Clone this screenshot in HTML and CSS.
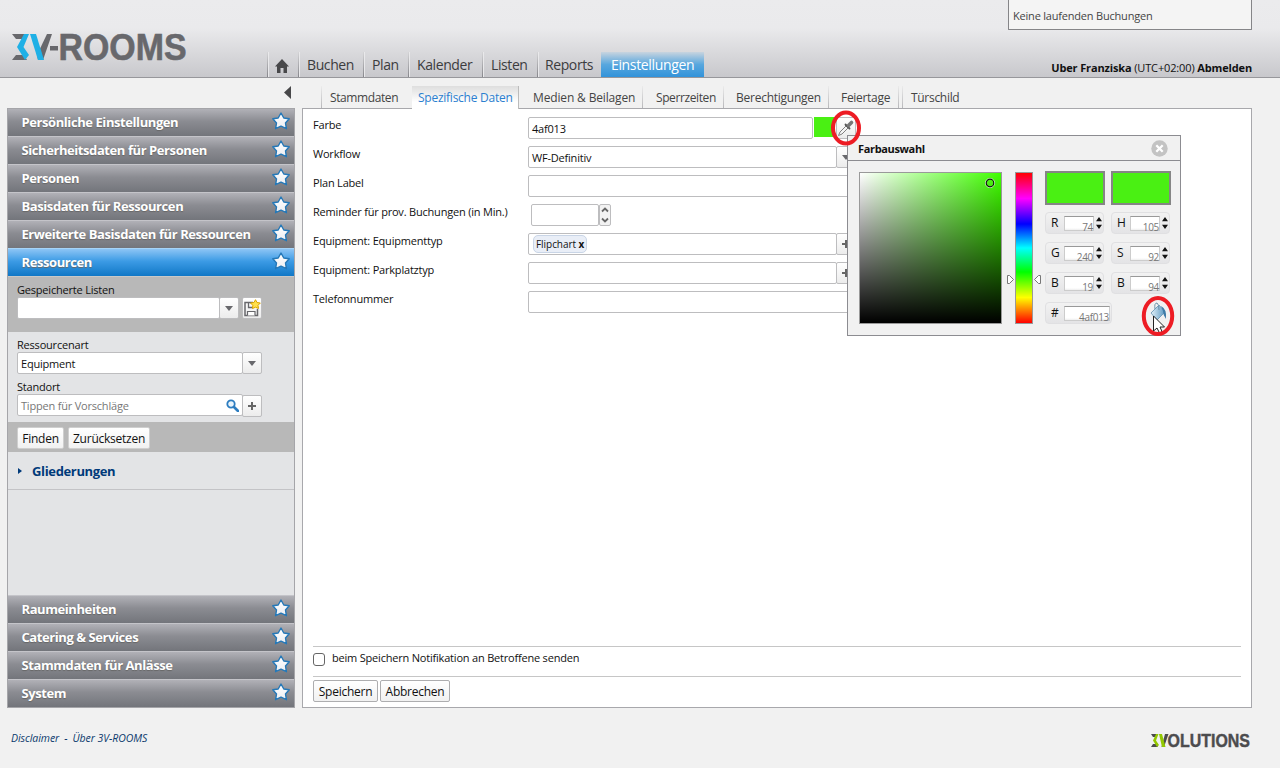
FILE: index.html
```html
<!DOCTYPE html>
<html lang="de">
<head>
<meta charset="utf-8">
<title>3V-ROOMS</title>
<link rel="stylesheet" href="styles.css">
</head>
<body>
<svg class="defs" width="0" height="0">
  <defs>
    <linearGradient id="starFill" x1="0" y1="0" x2="0" y2="1"><stop offset="0" stop-color="#ffffff"/><stop offset="1" stop-color="#eceef2"/></linearGradient>
    <symbol id="star" viewBox="0 0 18 18"><path d="M9 1 L11.800 6 L17.200 6.800 L13.500 11 L14.400 16.700 L9 14.200 L3.600 16.700 L4.500 11 L.8 6.800 L6.200 6Z" fill="url(#starFill)" stroke="#2478b8" stroke-width="1.400" stroke-linejoin="round"/></symbol>
  </defs>
</svg>
<header class="header">
  <svg class="logo" width="180" height="52" viewBox="0 -8 180 52">
    <path d="M0 4H15L12 9H4ZM0 30H15L12 25H4Z" fill="#68686c"/>
    <path d="M12 4H17L11.5 17L17 25L13 30L5 17Z" fill="#1fb0e6"/>
    <path d="M35 4H40L31 30H26L25 25Z" fill="#68686c"/>
    <path d="M18 4H24L32 30H26Z" fill="#1fb0e6"/>
    <path d="M38 16H46V20.500H38Z" fill="#68686c"/>
    <text x="46.5" y="30" textLength="128" lengthAdjust="spacingAndGlyphs" class="logo-text">ROOMS</text>
  </svg>
  <nav class="nav">
    <a class="nav-item home"><svg width="14" height="14" viewBox="0 0 14 14"><path d="M7 0L14 7.4H12V14H8.5V9H5.5V14H2V7.4H0Z" fill="#48484a"/></svg></a>
    <a class="nav-item n1">Buchen</a><a class="nav-item n2">Plan</a><a class="nav-item n3">Kalender</a><a class="nav-item n4">Listen</a><a class="nav-item n5">Reports</a><a class="nav-item active">Einstellungen</a>
  </nav>
  <div class="account">
    <div class="bookings">Keine laufenden Buchungen</div>
    <div class="user"><b>Uber Franziska</b> <span>(UTC+02:00)</span> <b>Abmelden</b></div>
  </div>
</header>
<div class="main">
  <div class="left">
    <div class="collapse"><svg width="7" height="13" viewBox="0 0 7 13"><path d="M7 0V13L0 6.5Z" fill="#48484a"/></svg></div>
    <aside class="sidebar">
      <div class="acc">Persönliche Einstellungen<svg><use href="#star"/></svg></div>
      <div class="acc">Sicherheitsdaten für Personen<svg><use href="#star"/></svg></div>
      <div class="acc">Personen<svg><use href="#star"/></svg></div>
      <div class="acc">Basisdaten für Ressourcen<svg><use href="#star"/></svg></div>
      <div class="acc">Erweiterte Basisdaten für Ressourcen<svg><use href="#star"/></svg></div>
      <div class="acc selected">Ressourcen<svg><use href="#star"/></svg></div>
      <div class="saved">
        <div class="lbl">Gespeicherte Listen</div>
        <div class="line"><div class="inp i1"></div><div class="btn drop"></div>
          <div class="btn save"><svg width="18" height="18" viewBox="0 0 18 18"><path d="M10 3.500H2V16.500H14.500V10" fill="none" stroke="#68686c" stroke-width="1.500"/><path d="M5.500 3V8.500H10" fill="none" stroke="#68686c" stroke-width="1.300"/><path d="M4.500 16.500V12.500H12V16.500" fill="#fff" stroke="#68686c" stroke-width="1.200"/><path d="M12.500 0.700L14 3.500L17.300 4L15 6.300L15.500 9.500L12.500 8.200L9.500 9.500L9.800 6.300L7.500 4L11 3.500Z" fill="#ffe04d" stroke="#dba400"/></svg></div></div>
      </div>
      <div class="filter">
        <div class="lbl">Ressourcenart</div>
        <div class="line"><div class="inp i2">Equipment</div><div class="btn drop"></div></div>
        <div class="lbl second">Standort</div>
        <div class="line"><div class="inp i2 hint">Tippen für Vorschläge<svg width="13" height="13" viewBox="0 0 13 13"><circle cx="5" cy="5" r="3.7" fill="#e8f4fc" stroke="#2d7dc0" stroke-width="1.8"/><path d="M8 8L12 12" stroke="#2d7dc0" stroke-width="2.6" stroke-linecap="round"/></svg></div><div class="btn plus low"></div></div>
      </div>
      <div class="actions"><div class="button">Finden</div><div class="button b2">Zurücksetzen</div></div>
      <div class="tree"><i></i>Gliederungen</div>
      <div class="space"></div>
      <div class="acc">Raumeinheiten<svg><use href="#star"/></svg></div>
      <div class="acc">Catering &amp; Services<svg><use href="#star"/></svg></div>
      <div class="acc">Stammdaten für Anlässe<svg><use href="#star"/></svg></div>
      <div class="acc last">System<svg><use href="#star"/></svg></div>
    </aside>
  </div>
  <div class="right">
    <nav class="tabs"><a class="t1">Stammdaten</a><a class="t2 on">Spezifische Daten</a><a class="t3">Medien &amp; Beilagen</a><a class="t4">Sperrzeiten</a><a class="t5">Berechtigungen</a><a class="t6">Feiertage</a><a class="t7">Türschild</a></nav>
    <section class="panel">
      <div class="row"><label>Farbe</label><div class="inp color">4af013</div><div class="swatch"></div><div class="btn pip"><svg width="18" height="18" viewBox="0 0 18 18"><path d="M1.500 16.500L3 13L9 7L11 9L5 15Z" fill="#f4f4f4" stroke="#808080"/><path d="M8.500 5.500L12.500 9.500" stroke="#555" stroke-width="1.800" stroke-linecap="round"/><path d="M11.500 6.500L14.500 3.500" stroke="#777" stroke-width="3.600" stroke-linecap="round"/></svg></div></div>
      <div class="row"><label>Workflow</label><div class="inp mid">WF-Definitiv</div><div class="btn drop"></div></div>
      <div class="row"><label>Plan Label</label><div class="inp full"></div></div>
      <div class="row"><label>Reminder für prov. Buchungen (in Min.)</label><div class="inp num"></div><div class="spin"><svg width="10" height="18" viewBox="0 0 10 18"><path d="M2 5.5L5 2.5L8 5.5M2 12.5L5 15.5L8 12.5" fill="none" stroke="#666" stroke-width="1.8"/></svg></div></div>
      <div class="row"><label>Equipment: Equipmenttyp</label><div class="inp mid"><span class="chip">Flipchart <b>x</b></span></div><div class="btn plus"></div></div>
      <div class="row"><label>Equipment: Parkplatztyp</label><div class="inp mid"></div><div class="btn plus"></div></div>
      <div class="row"><label>Telefonnummer</label><div class="inp full"></div></div>
      <div class="gap"></div>
      <div class="notify"><span class="check"></span><span>beim Speichern Notifikation an Betroffene senden</span></div>
      <div class="submit"><div class="button">Speichern</div><div class="button b3">Abbrechen</div></div>
    </section>
  </div>
</div>
<footer class="footer">
  <div class="links"><a>Disclaimer</a><span>-</span><a>Über 3V-ROOMS</a></div>
  <svg width="104" height="30" viewBox="0 -8 104 30"><path d="M1 1H8L6 4H3ZM1 14H8L6 11H3Z" fill="#4c4c4e"/><path d="M15 1H18.5L14 14H11.5Z" fill="#4c4c4e"/><path d="M6 1H8.500L6 7.500L9 12L7 14L3 7.500ZM9 1H12L15.500 14H12Z" fill="#93c801"/><text x="17.500" y="14" textLength="82.500" lengthAdjust="spacingAndGlyphs" class="foot-logo">OLUTIONS</text></svg>
</footer>

<div class="picker">
  <div class="picker-head">Farbauswahl<svg width="17" height="17" viewBox="0 0 17 17"><circle cx="8.5" cy="8.5" r="8.2" fill="#c3c3c3"/><path d="M5.3 5.3L11.7 11.7M11.7 5.3L5.3 11.7" stroke="#fff" stroke-width="2.3"/></svg></div>
  <div class="picker-body">
    <div class="sv"><svg class="dot" width="10" height="10" viewBox="0 0 10 10"><circle cx="5" cy="5" r="4.6" fill="none" stroke="#fff" stroke-width=".8"/><circle cx="5" cy="5" r="3.8" fill="none" stroke="#111" stroke-width="1.2"/></svg></div>
    <div class="hue"><svg class="arrows" width="34" height="9" viewBox="0 0 34 9"><path d="M.5 .5H2.5L6.5 4.5L2.5 8.5H.5ZM33.5 .5H31.5L27.5 4.5L31.5 8.5H33.5Z" fill="#fff" stroke="#777"/></svg></div>
    <div class="fields">
      <div class="new"></div><div class="new"></div>
      <div class="f"><b>R</b><span>74</span><i></i></div><div class="f"><b>H</b><span>105</span><i></i></div>
      <div class="f"><b>G</b><span>240</span><i></i></div><div class="f"><b>S</b><span>92</span><i></i></div>
      <div class="f"><b>B</b><span>19</span><i></i></div><div class="f"><b>B</b><span>94</span><i></i></div>
      <div class="f hex"><b>#</b><span>4af013</span></div>
    </div>
  </div>
</div>
<svg class="fill-tool" width="34" height="42" viewBox="0 0 34 42"><defs><linearGradient id="bucket"><stop offset="0" stop-color="#e3f1f8"/><stop offset="1" stop-color="#5a98c2"/></linearGradient></defs>
  <path d="M10 18L18 10L24 17L16 25Z" fill="url(#bucket)" stroke="#6292b1" stroke-width=".8"/><path d="M14 14Q13 8 16 8Q18 9 18 15" fill="none" stroke="#6d93aa"/><path d="M20 11Q26 14 25 24Q22 20 22 16Z" fill="#3e7ca8"/>
  <path d="M12.500 21V36L16 33L18.500 38L21 36.500L19 32H23.500Z" fill="#fff" stroke="#222"/>
  <ellipse cx="17" cy="21" rx="14.200" ry="18" fill="none" stroke="#ed1c24" stroke-width="4"/></svg>
<svg class="ring" width="32" height="36" viewBox="0 0 32 36"><ellipse cx="16" cy="18" rx="13" ry="15.500" fill="none" stroke="#ed1c24" stroke-width="4"/></svg>
</body>
</html>
```
FILE: styles.css
```css
* { box-sizing: border-box; }
body { margin: 0; width: 1280px; height: 768px; overflow: hidden; background: #f1f1f1; font: 11px/16px "Open Sans", "Noto Sans", sans-serif; letter-spacing: -.2px; color: #111; display: flex; flex-direction: column; }
.defs { position: absolute; }
.header { height: 78px; flex: none; display: flex; border-bottom: 1px solid #97979b; background: linear-gradient(#ebebed, #eaeaec 28px, #c8c8cc 77px); padding-right: 28px; }
.logo { margin: 22px 0 0 12px; flex: none; overflow: visible; }
.logo-text { font: bold 37px "Liberation Sans", sans-serif; fill: #68686c; stroke: #68686c; stroke-width: .6px; letter-spacing: 0; }
.nav { display: flex; align-items: flex-end; margin-left: 75px; }
.nav-item { height: 25px; border-left: 1px solid #8f8f93; border-image: linear-gradient(#d8d8da, #838388) 1; box-shadow: inset 1px 0 #e9e9eb; color: #3c3c3e; font-size: 14px; line-height: 25px; padding-left: 8px; letter-spacing: -.4px; white-space: nowrap; }
.home { width: 31px; padding: 7px 0 0 7px; line-height: 0; }
.n1 { width: 65px; } .n2 { width: 45px; } .n3 { width: 74px; } .n4 { width: 55px; } .n5 { width: 64px; padding-left: 7px; }
.nav .active { width: 103px; color: #fff; background: linear-gradient(#c8d4df, #58a7de 50%, #3293da); border: 0; box-shadow: none; padding-left: 10px; letter-spacing: -.35px; }
.account { margin-left: auto; width: 244px; display: flex; flex-direction: column; justify-content: space-between; }
.bookings { height: 30px; border: 1px solid #858588; border-top: 0; background: #f4f4f4; padding: 8px 4px; color: #444; border-radius: 0 0 1px 1px; }
.user { text-align: right; white-space: nowrap; margin-bottom: 1px; letter-spacing: -.14px; }
.main { display: flex; height: 630px; }
.left { width: 295px; padding-left: 7px; display: flex; flex-direction: column; }
.collapse { height: 30px; padding: 8px 4px 0 0; text-align: right; line-height: 0; letter-spacing: 0; }
.sidebar { height: 600px; border: 1px solid #a5a5a9; display: flex; flex-direction: column; background: #e3e4e6; }
.acc { height: 28px; flex: none; display: flex; align-items: center; justify-content: space-between; padding: 0 4px 2px 13.5px; color: #fff; font-weight: bold; font-size: 13px; letter-spacing: -.42px; background: linear-gradient(#b1b1b7, #8b8c92 45%, #73757b); border-top: 1px solid #c4c4c9; text-shadow: 0 1px 1px #666; }
.acc:first-child { height: 27px; border-top: 0; }
.acc svg { width: 18px; height: 18px; margin-top: -2px; }
.acc.selected { background: linear-gradient(#8dc5f5, #3c9be5 45%, #1077c6); border-color: #a6d4f8; height: 28px; }
.saved { height: 56px; flex: none; background: #b8b8b8; padding: 5px 9px; border-top: 1px solid #c8c8c8; }
.saved .lbl { height: 15px; }
.filter { height: 90px; flex: none; padding: 5px 9px 0; }
.lbl { height: 15px; line-height: 15px; }
.line { display: flex; height: 22px; }
.second { margin-top: 5px; }
.inp { height: 22px; border: 1px solid #bdbdbf; border-radius: 2px; background: #fff; padding: 1px 3px 0; line-height: 20px; display: flex; justify-content: space-between; align-items: center; flex: none; white-space: nowrap; }
.i1 { width: 203px; } .i2 { width: 226px; }
.hint { color: #777; }
.btn { width: 20px; height: 22px; border: 1px solid #bdbdbf; border-radius: 2px; background: linear-gradient(#fff, #ececec); display: flex; align-items: center; justify-content: center; flex: none; }
.inp + .btn { margin-left: -1px; }
.drop::before { content: ""; border: 4.5px solid transparent; border-top: 5px solid #68686c; border-bottom: 0; }
.plus::before { content: ""; width: 8px; height: 8px; background: linear-gradient(#666, #666) center / 8px 2px no-repeat, linear-gradient(#666, #666) center / 2px 8px no-repeat; }
.line .low { margin-top: 1px; }
.save { margin-left: 3px; }
.actions { height: 30px; flex: none; background: #b8b8b8; padding: 5px 9px; display: flex; gap: 4px; }
.button { height: 22px; width: 47px; border: 1px solid #c2c2c4; border-radius: 2px; background: linear-gradient(#fff, #f1f1f1); text-align: center; line-height: 21px; font-size: 12px; letter-spacing: -.25px; }
.b2 { width: 82px; }
.actions .button { border-color: #cfcfcf; line-height: 22px; }
.tree { height: 38px; flex: none; border-bottom: 1px solid #c3c3c6; display: flex; align-items: center; padding-left: 10px; color: #003a7a; font-weight: bold; font-size: 13px; letter-spacing: -.35px; }
.tree i { border: 3px solid transparent; border-left: 4px solid #003a7a; border-right: 0; margin-right: 10px; }
.space { flex: 1; }
.right { width: 950px; margin-left: 7px; }
.tabs { height: 30px; padding-left: 19px; display: flex; align-items: flex-end; }
.tabs a { height: 22px; line-height: 24px; font-size: 12px; letter-spacing: -.3px; color: #444; white-space: nowrap; flex: none; border-left: 1px solid; border-image: linear-gradient(#eee, #b5b5b8) 1; padding-left: 8px; }
.tabs .t1 { width: 91px; letter-spacing: -.4px; }
.tabs .on { width: 107px; height: 23px; margin-bottom: -1px; padding-left: 6px; color: #2b7fd0; background: linear-gradient(#dedede, #fff 70%); border: 0; border-right: 1px solid #bbb; border-image: none; position: relative; letter-spacing: -.25px; }
.tabs .t3 { width: 123px; padding-left: 14px; border: 0; letter-spacing: -.15px; }
.tabs .t4 { width: 81px; padding-left: 13px; letter-spacing: -.4px; }
.tabs .t5 { width: 105px; padding-left: 12px; letter-spacing: -.25px; }
.tabs .t6 { width: 71px; padding-left: 12px; border-right: 1px solid #c4c4c6; }
.tabs .t7 { width: 80px; margin-left: 3px; }
.panel { height: 600px; background: #fff; border: 1px solid #a8a8ac; padding: 8px 10px 9px; display: flex; flex-direction: column; }
.row { height: 29px; flex: none; display: flex; }
label { width: 215px; flex: none; line-height: 16px; white-space: nowrap; }
.color { width: 285px; } .mid { width: 309px; } .full { width: 329px; }
.num { width: 68px; margin-left: 3px; }
.swatch { width: 21px; height: 20px; background: #4af013; margin-left: 1px; }
.pip { margin-left: 1px; }
.spin { width: 12px; height: 22px; border: 1px solid #bdbdbf; border-radius: 2px; background: #f2f2f2; padding-top: 1px; line-height: 0; }
.chip { height: 18px; line-height: 17px; font-size: 10px; letter-spacing: -.05px; background: #e9eef7; border: 1px solid #c9d5e6; border-radius: 5px; padding: 0 2px; margin: -1px 0 0 1px; width: 54px; }
.gap { flex: 1; }
.notify { height: 30px; border-top: 1px solid #c6c6c6; display: flex; gap: 7px; padding-top: 3px; }
.check { width: 12px; height: 13px; margin-top: 3px; border: 1px solid #666; border-radius: 3px; }
.submit { height: 22px; border-top: 1px solid #c6c6c6; padding-top: 3px; display: flex; gap: 2px; }
.submit .button { width: 65px; flex: none; border-color: #adadaf; }
.submit .b3 { width: 70px; }
.footer { display: flex; justify-content: space-between; align-items: center; height: 60px; padding: 2px 26px 0 11px; color: #0b3a6d; font-style: italic; font-size: 10.5px; letter-spacing: -.05px; }
.links { display: flex; gap: 5px; margin-top: -3px; }
.foot-logo { font: bold 18px "Liberation Sans", sans-serif; fill: #4c4c4e; stroke: #4c4c4e; stroke-width: .4px; letter-spacing: 0; }
.footer svg { overflow: visible; margin-top: 2px; }
.picker { position: absolute; left: 847px; top: 135px; width: 334px; height: 201px; background: #f1f1f1; border: 1px solid #8c8c91; }
.picker-head { height: 25px; border-bottom: 1px solid #8c8c91; display: flex; justify-content: space-between; align-items: center; padding: 1px 12px 0 10px; font-weight: bold; letter-spacing: -.35px; }
.picker-body { display: flex; padding: 11px 0 10px 11px; }
.sv { width: 143px; height: 152px; flex: none; border: 1px solid #999; position: relative; background: linear-gradient(transparent, #000), linear-gradient(to right, #fff, #40ff00); }
.dot { position: absolute; left: 125px; top: 5px; }
.hue { width: 18px; height: 152px; flex: none; margin-left: 13px; border: 1px solid #999; position: relative; background: linear-gradient(#f00, #f0f 17%, #00f 34%, #0ff 50%, #0f0 66%, #ff0 83%, #f00); }
.arrows { position: absolute; left: -9px; top: 102px; }
.fields { margin-left: 12px; display: grid; grid-template-columns: 60px 60px; grid-template-rows: 34px 22px 22px 22px 22px; column-gap: 6px; row-gap: 8px; margin-top: -1px; }
.new { background: #4af013; border: 2px solid #858585; }
.f { margin: -1px 1px 0 0; border: 1px solid #e0e0e2; border-radius: 4px; background: linear-gradient(#f2f2f2, #e4e4e6); display: flex; align-items: center; padding-left: 5px; height: 22px; }
.f b { font-weight: normal; width: 13px; font-size: 12px; }
.f span { width: 30px; height: 15px; border: 1px solid #ccc; border-top-color: #999; background: linear-gradient(#fff 11px, #eee); color: #777; text-align: right; font-size: 10px; line-height: 21px; letter-spacing: -.3px; }
.f i { margin-left: 2px; width: 6px; height: 12px; background: linear-gradient(#111, #111); clip-path: polygon(50% 0, 100% 35%, 0 35%, 50% 0, 0 65%, 100% 65%, 50% 100%, 0 65%); }
.f.hex { width: 67px; }
.f.hex span { width: 46px; }
.fill-tool { position: absolute; left: 1141px; top: 295px; }
.ring { position: absolute; left: 830px; top: 110px; }
```
